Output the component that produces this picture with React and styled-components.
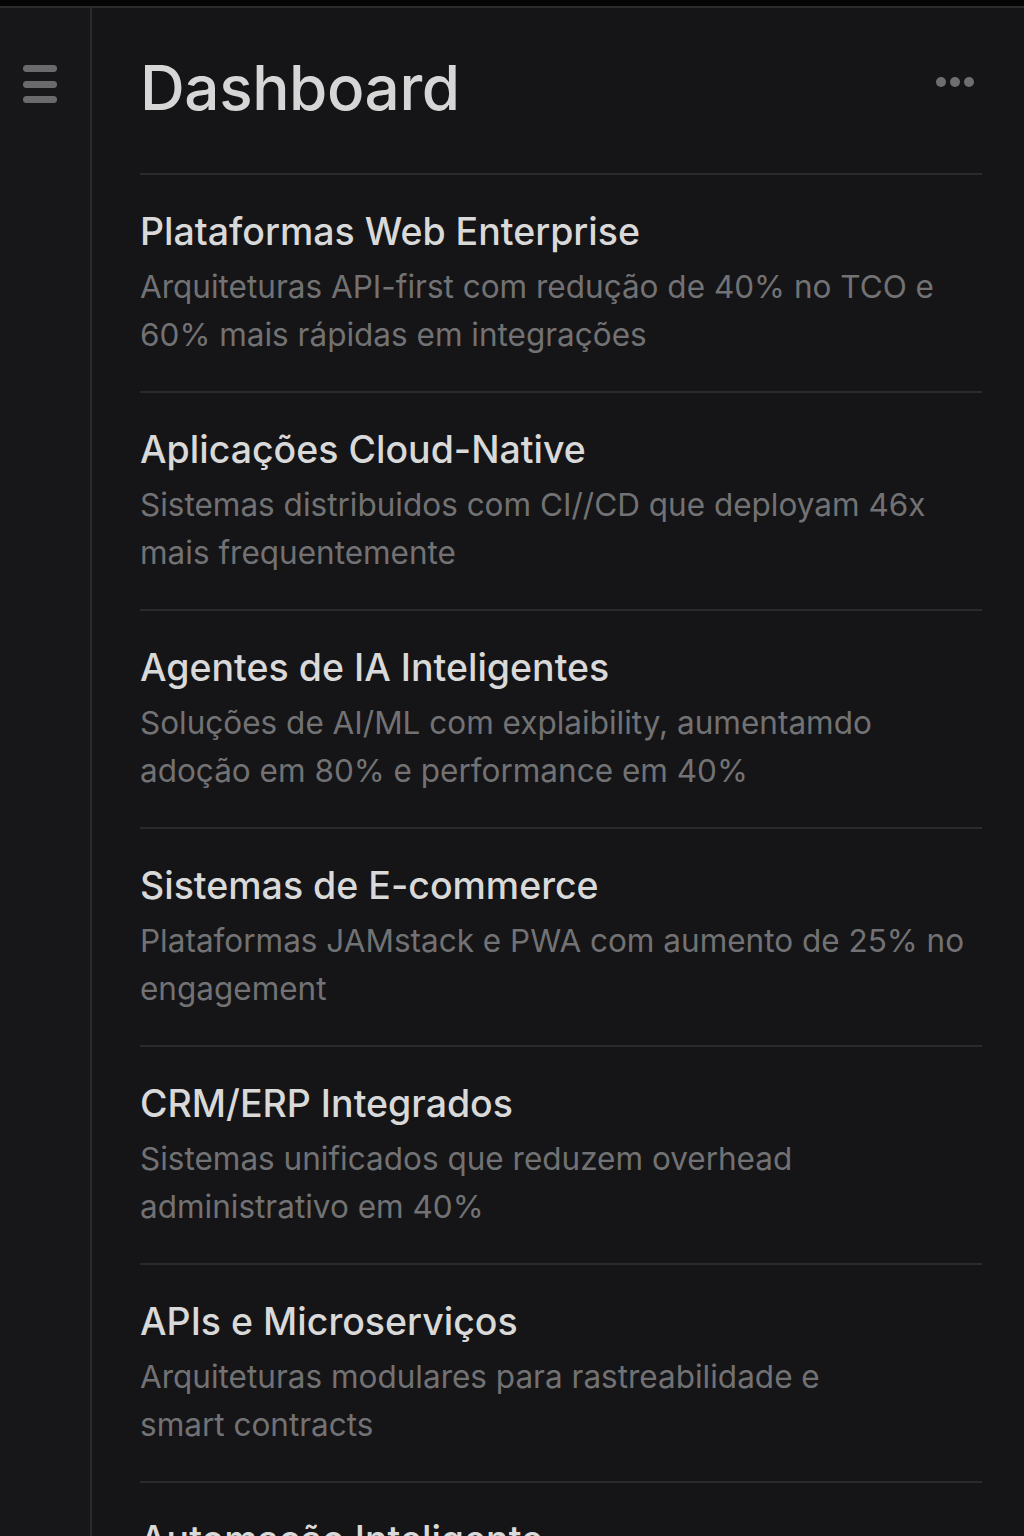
import React from "react";
import styled, { createGlobalStyle } from "styled-components";

const GlobalStyle = createGlobalStyle`
  html, body {
    margin: 0;
    padding: 0;
    background: #151517;
  }
  body {
    font-family: Inter, "Noto Sans", "Liberation Sans", sans-serif;
    -webkit-font-smoothing: antialiased;
  }
`;

const Frame = styled.div`
  height: 1536px;
  overflow: hidden;
  display: flex;
  flex-direction: column;
  background: #151517;
`;

const TopStrip = styled.div`
  height: 6px;
  background: #050505;
  border-bottom: 2px solid #2c2c2e;
  flex-shrink: 0;
`;

const Body = styled.div`
  flex: 1;
  display: flex;
  min-height: 0;
`;

const Sidebar = styled.aside`
  width: 92px;
  flex-shrink: 0;
  border-right: 2px solid #2a2a2c;
  background: #171719;
  display: flex;
  justify-content: center;
  padding-top: 57px;
  box-sizing: border-box;
`;

const MenuButton = styled.button`
  width: 36px;
  height: 38px;
  padding: 0;
  margin-left: -8px;
  border: none;
  background: none;
  display: flex;
  flex-direction: column;
  justify-content: space-between;
  cursor: pointer;
`;

const MenuBar = styled.span`
  display: block;
  height: 7px;
  width: 34px;
  border-radius: 4px;
  background: #6a6a6c;
`;

const Main = styled.main`
  flex: 1;
  padding: 0 42px 0 48px;
  min-width: 0;
`;

const Header = styled.header`
  display: flex;
  align-items: center;
  justify-content: space-between;
  height: 167px;
  border-bottom: 2px solid #2a2a2c;
  box-sizing: border-box;
`;

const Title = styled.h1`
  margin: -7px 0 0;
  font-size: 62px;
  font-weight: 500;
  letter-spacing: -0.4px;
  color: #d6d6d6;
`;

const MoreButton = styled.button`
  display: flex;
  gap: 4px;
  padding: 0;
  margin: -17px 8px 0 0;
  border: none;
  background: none;
  cursor: pointer;
`;

const Dot = styled.span`
  width: 10px;
  height: 10px;
  border-radius: 50%;
  background: #6e6e70;
`;

const List = styled.ul`
  list-style: none;
  margin: 0;
  padding: 0;
`;

const Item = styled.li`
  padding: 35px 0 32px;
  border-bottom: 2px solid #2a2a2c;
`;

const ItemTitle = styled.h2`
  margin: 0 0 9px;
  font-size: 37.5px;
  line-height: 44px;
  font-weight: 500;
  color: #d9d9d9;
`;

const ItemText = styled.p`
  margin: 0;
  font-size: 31.5px;
  line-height: 48px;
  font-weight: 400;
  color: #727274;
`;

const services = [
  {
    title: "Plataformas Web Enterprise",
    text: "Arquiteturas API-first com redução de 40% no TCO e 60% mais rápidas em integrações",
  },
  {
    title: "Aplicações Cloud-Native",
    text: "Sistemas distribuidos com CI//CD que deployam 46x mais frequentemente",
  },
  {
    title: "Agentes de IA Inteligentes",
    text: "Soluções de AI/ML com explaibility, aumentamdo adoção em 80% e performance em 40%",
  },
  {
    title: "Sistemas de E-commerce",
    text: "Plataformas JAMstack e PWA com aumento de 25% no engagement",
  },
  {
    title: "CRM/ERP Integrados",
    text: "Sistemas unificados que reduzem overhead administrativo em 40%",
  },
  {
    title: "APIs e Microserviços",
    text: "Arquiteturas modulares para rastreabilidade e smart\u00a0contracts",
  },
  {
    title: "Automação Inteligente",
    text: "Fluxos automatizados com orquestração de processos e monitoramento",
  },
];

export default function App() {
  return (
    <Frame>
      <GlobalStyle />
      <TopStrip />
      <Body>
        <Sidebar>
          <MenuButton aria-label="Menu">
            <MenuBar />
            <MenuBar />
            <MenuBar />
          </MenuButton>
        </Sidebar>
        <Main>
          <Header>
            <Title>Dashboard</Title>
            <MoreButton aria-label="Mais opções">
              <Dot />
              <Dot />
              <Dot />
            </MoreButton>
          </Header>
          <List>
            {services.map((s) => (
              <Item key={s.title}>
                <ItemTitle>{s.title}</ItemTitle>
                <ItemText>{s.text}</ItemText>
              </Item>
            ))}
          </List>
        </Main>
      </Body>
    </Frame>
  );
}
